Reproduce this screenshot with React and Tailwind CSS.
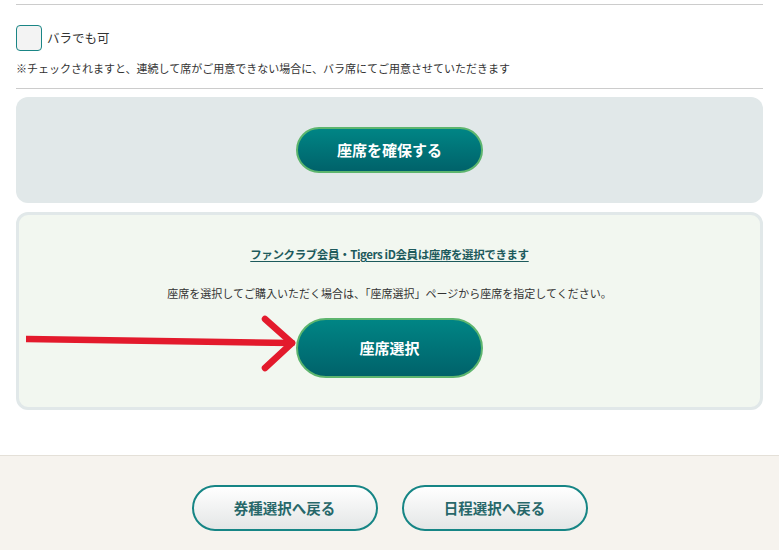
export default function App() {
  return (
    <div className="min-h-screen bg-white" style={{ fontFamily: '"Noto Sans CJK JP", "Noto Sans", sans-serif' }}>
      <div className="px-4 pt-1">
        <div className="h-px bg-[#cccccc]" />

        <label className="flex items-center gap-[5px] mt-5">
          <span className="w-[26px] h-[26px] rounded-[4px] border border-[#1a8585] bg-[#f3f3f3]" />
          <span className="text-[12.5px] text-[#333]">バラでも可</span>
        </label>
        <p className="mt-[9px] text-[11px] leading-4 text-[#333]">
          ※チェックされますと、連続して席がご用意できない場合に、バラ席にてご用意させていただきます
        </p>

        <div className="h-px bg-[#cccccc] mt-[12px]" />

        <div className="mt-2 h-[106px] rounded-xl bg-[#e1e8e9] flex items-center justify-center">
          <button className="w-[187px] h-[46px] rounded-full border-2 border-[#5db56e] bg-gradient-to-b from-[#008585] to-[#00626a] text-white font-bold text-[15px]">
            座席を確保する
          </button>
        </div>

        <div className="mt-[9px] h-[198px] rounded-xl border-[3px] border-[#e1e8e9] bg-[#f2f7f0] flex flex-col items-center">
          <a className="mt-[31px] text-[11.5px] font-bold text-[#1d5a5c] underline underline-offset-2 tracking-[-0.4px]">
            ファンクラブ会員・Tigers iD会員は座席を選択できます
          </a>
          <p className="mt-[22px] text-[11px] text-[#333]">
            座席を選択してご購入いただく場合は、「座席選択」ページから座席を指定してください。
          </p>
          <div className="relative mt-[16px]">
            <svg className="absolute left-[-270px] top-[-6px]" width="280" height="72" viewBox="0 0 280 72">
              <g stroke="#e31a2c" strokeWidth="6.5" strokeLinecap="round" strokeLinejoin="round" fill="none">
                <line x1="1" y1="27" x2="266" y2="31" />
                <polyline points="239,7 266,31 239,56" />
              </g>
            </svg>
            <button className="w-[187px] h-[60px] rounded-full border-2 border-[#5db56e] bg-gradient-to-b from-[#008585] to-[#00626a] text-white font-bold text-[15px]">
              座席選択
            </button>
          </div>
        </div>
      </div>

      <div className="mt-[45px] border-t border-[#e4e0d8] bg-[#f6f3ee] h-[100px] flex justify-center gap-6 pt-[29px]">
        <button className="w-[186px] h-[46px] rounded-full border-2 border-[#168585] bg-gradient-to-b from-white to-[#e4e6e6] text-[#27686a] font-bold text-[14.5px]">
          券種選択へ戻る
        </button>
        <button className="w-[186px] h-[46px] rounded-full border-2 border-[#168585] bg-gradient-to-b from-white to-[#e4e6e6] text-[#27686a] font-bold text-[14.5px]">
          日程選択へ戻る
        </button>
      </div>
    </div>
  );
}
